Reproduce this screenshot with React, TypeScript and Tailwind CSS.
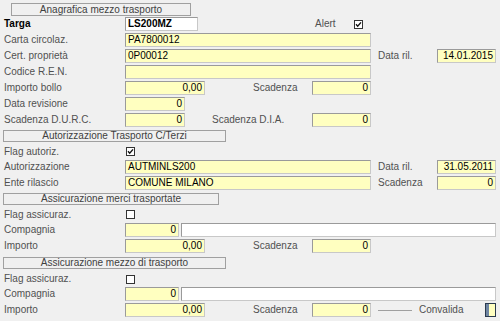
import clsx from "clsx";

// Scheda mezzo di trasporto - riproduzione form gestionale
function Label({ w = "w-[121px]", bold, children }: { w?: string; bold?: boolean; children: React.ReactNode }) {
  return (
    <span
      className={clsx(
        "shrink-0 whitespace-nowrap",
        w,
        bold ? "font-bold text-black" : "text-[#505050]"
      )}
    >
      {children}
    </span>
  );
}

function Field({
  w,
  value = "",
  right,
  white,
  bold,
}: {
  w: string;
  value?: string;
  right?: boolean;
  white?: boolean;
  bold?: boolean;
}) {
  return (
    <div
      className={clsx(
        "h-[14px] shrink-0 overflow-hidden whitespace-nowrap border border-t-[#9a9a9a] border-l-[#9a9a9a] border-r-[#c8c8c8] border-b-[#c8c8c8] px-[2px] text-[10px] leading-[12px] text-black",
        white ? "bg-white" : "bg-[#ffffc0]",
        right && "text-right",
        bold && "font-bold",
        w
      )}
    >
      {value}
    </div>
  );
}

function Check({ checked }: { checked?: boolean }) {
  return (
    <svg width="9" height="9" viewBox="0 0 9 9" className="shrink-0">
      <rect x="0.5" y="0.5" width="8" height="8" fill="#fff" stroke="#333" />
      {checked && <path d="M2 4.3 L3.7 6.2 L7 2.4" fill="none" stroke="#111" strokeWidth="1.4" />}
    </svg>
  );
}

function Header({ w, pl = "pl-[3px]", h = "h-[16px]", children }: { w: string; pl?: string; h?: string; children: React.ReactNode }) {
  return (
    <div className={clsx("flex items-center", h, pl)}>
      <div
        className={clsx(
          "h-[12px] border border-[#a0a0a0] text-center text-[10px] leading-[10px] text-[#404040]",
          w
        )}
      >
        {children}
      </div>
    </div>
  );
}

function Row({ h = "h-[16px]", children }: { h?: string; children: React.ReactNode }) {
  return <div className={clsx("flex items-center pl-[4px]", h)}>{children}</div>;
}

export default function App() {
  return (
    <div
      className="h-[321px] w-[500px] overflow-hidden bg-[#f0f0f0] pt-[3px] text-[10px] leading-[12px]"
      style={{ fontFamily: '"Liberation Sans", Arial, sans-serif' }}
    >
      <div className="flex h-[13px] items-start pl-[11px]">
        <div className="h-[13px] w-[180px] border border-[#a0a0a0] text-center text-[10px] leading-[11px] text-[#404040]">
          Anagrafica mezzo trasporto
        </div>
      </div>

      <Row>
        <Label bold>Targa</Label>
        <Field w="w-[73px]" value="LS200MZ" white bold />
        <span className="ml-[117px] w-[39px] shrink-0 text-[#505050]">Alert</span>
        <Check checked />
      </Row>
      <Row>
        <Label>Carta circolaz.</Label>
        <Field w="w-[246px]" value="PA7800012" />
      </Row>
      <Row>
        <Label>Cert. proprietà</Label>
        <Field w="w-[246px]" value="0P00012" />
        <span className="ml-[7px] w-[59px] shrink-0 text-[#505050]">Data ril.</span>
        <Field w="w-[59px]" value="14.01.2015" right />
      </Row>
      <Row>
        <Label>Codice R.E.N.</Label>
        <Field w="w-[246px]" />
      </Row>
      <Row>
        <Label>Importo bollo</Label>
        <Field w="w-[80px]" value="0,00" right />
        <span className="ml-[48px] w-[59px] shrink-0 text-[#505050]">Scadenza</span>
        <Field w="w-[59px]" value="0" right />
      </Row>
      <Row>
        <Label>Data revisione</Label>
        <Field w="w-[60px]" value="0" right />
      </Row>
      <Row>
        <Label>Scadenza D.U.R.C.</Label>
        <Field w="w-[60px]" value="0" right />
        <span className="ml-[27px] w-[100px] shrink-0 text-[#505050]">Scadenza D.I.A.</span>
        <Field w="w-[59px]" value="0" right />
      </Row>

      <Header w="w-[223px]">Autorizzazione Trasporto C/Terzi</Header>
      <Row h="h-[15px]">
        <Label>Flag autoriz.</Label>
        <span className="ml-[1px]">
          <Check checked />
        </span>
      </Row>
      <Row>
        <Label>Autorizzazione</Label>
        <Field w="w-[246px]" value="AUTMINLS200" />
        <span className="ml-[7px] w-[59px] shrink-0 text-[#505050]">Data ril.</span>
        <Field w="w-[59px]" value="31.05.2011" right />
      </Row>
      <Row>
        <Label>Ente rilascio</Label>
        <Field w="w-[246px]" value="COMUNE MILANO" />
        <span className="ml-[7px] w-[59px] shrink-0 text-[#505050]">Scadenza</span>
        <Field w="w-[59px]" value="0" right />
      </Row>

      <Header w="w-[216px]">Assicurazione merci trasportate</Header>
      <Row h="h-[15px]">
        <Label>Flag assicuraz.</Label>
        <span className="ml-[1px]">
          <Check />
        </span>
      </Row>
      <Row>
        <Label>Compagnia</Label>
        <Field w="w-[54px]" value="0" right />
        <span className="ml-[2px]">
          <Field w="w-[315px]" white />
        </span>
      </Row>
      <Row>
        <Label>Importo</Label>
        <Field w="w-[80px]" value="0,00" right />
        <span className="ml-[48px] w-[59px] shrink-0 text-[#505050]">Scadenza</span>
        <Field w="w-[59px]" value="0" right />
      </Row>

      <Header w="w-[223px]" h="h-[18px]">
        Assicurazione mezzo di trasporto
      </Header>
      <Row h="h-[14px]">
        <Label>Flag assicuraz.</Label>
        <span className="ml-[1px]">
          <Check />
        </span>
      </Row>
      <Row>
        <Label>Compagnia</Label>
        <Field w="w-[54px]" value="0" right />
        <span className="ml-[2px]">
          <Field w="w-[315px]" white />
        </span>
      </Row>
      <Row>
        <Label>Importo</Label>
        <Field w="w-[80px]" value="0,00" right />
        <span className="ml-[48px] w-[59px] shrink-0 text-[#505050]">Scadenza</span>
        <Field w="w-[59px]" value="0" right />
        <div className="ml-[7px] h-px w-[34px] shrink-0 bg-[#a0a0a0]" />
        <span className="ml-[7px] w-[66px] shrink-0 text-[#505050]">Convalida</span>
        <div className="flex h-[14px] w-[11px] shrink-0 border border-[#2b3a4e]">
          <div className="w-[3px] bg-[#6f86a3]" />
          <div className="flex-1 bg-[#ffffc0]" />
        </div>
      </Row>
    </div>
  );
}
